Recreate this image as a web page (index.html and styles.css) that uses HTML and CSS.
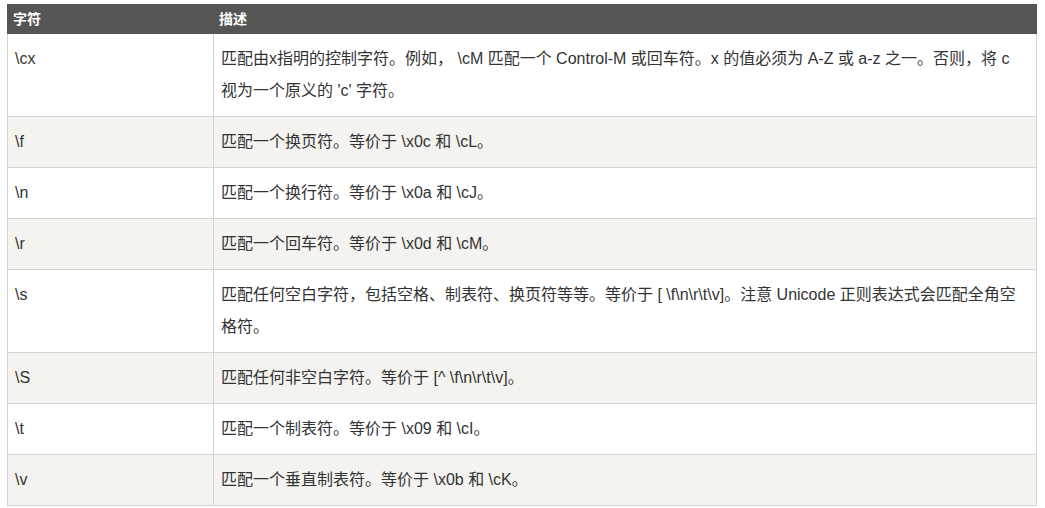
FILE: index.html
```html
<!DOCTYPE html>
<html lang="zh">
<head>
<meta charset="utf-8">
<link rel="stylesheet" href="styles.css">
</head>
<body>
<table class="reference">
  <colgroup><col class="c1"><col class="c2"></colgroup>
  <thead>
    <tr><th>字符</th><th>描述</th></tr>
  </thead>
  <tbody>
    <tr><td>\cx</td><td>匹配由x指明的控制字符。例如， \cM 匹配一个 Control-M 或回车符。x 的值必须为 A-Z 或 a-z 之一。否则，将 c 视为一个原义的 'c' 字符。</td></tr>
    <tr><td>\f</td><td>匹配一个换页符。等价于 \x0c 和 \cL。</td></tr>
    <tr><td>\n</td><td>匹配一个换行符。等价于 \x0a 和 \cJ。</td></tr>
    <tr><td>\r</td><td>匹配一个回车符。等价于 \x0d 和 \cM。</td></tr>
    <tr><td>\s</td><td>匹配任何空白字符，包括空格、制表符、换页符等等。等价于 [ \f\n\r\t\v]。注意 Unicode 正则表达式会匹配全角空格符。</td></tr>
    <tr><td>\S</td><td>匹配任何非空白字符。等价于 [^ \f\n\r\t\v]。</td></tr>
    <tr><td>\t</td><td>匹配一个制表符。等价于 \x09 和 \cI。</td></tr>
    <tr><td>\v</td><td>匹配一个垂直制表符。等价于 \x0b 和 \cK。</td></tr>
  </tbody>
</table>
</body>
</html>
```
FILE: styles.css
```css
html, body {
  margin: 0;
  padding: 0;
  background: #fff;
}
body {
  padding: 4px 0 0 7px;
  font-family: "Liberation Sans", Arial, "Noto Sans CJK SC", sans-serif;
  color: #333;
}
.reference {
  border-collapse: collapse;
  table-layout: fixed;
  width: 1030px;
}
.c1 { width: 206px; }
.reference th {
  background: #555;
  color: #fff;
  font-size: 14px;
  font-weight: bold;
  line-height: 20px;
  padding: 4px 5px;
  text-align: left;
  border: 1px solid #555;
}
.reference td {
  font-size: 16px;
  line-height: 32px;
  padding: 9px 7px;
  border: 1px solid #d4d4d4;
  vertical-align: top;
}
.reference tbody tr:nth-child(even) td {
  background: #f4f3ef;
}
```
